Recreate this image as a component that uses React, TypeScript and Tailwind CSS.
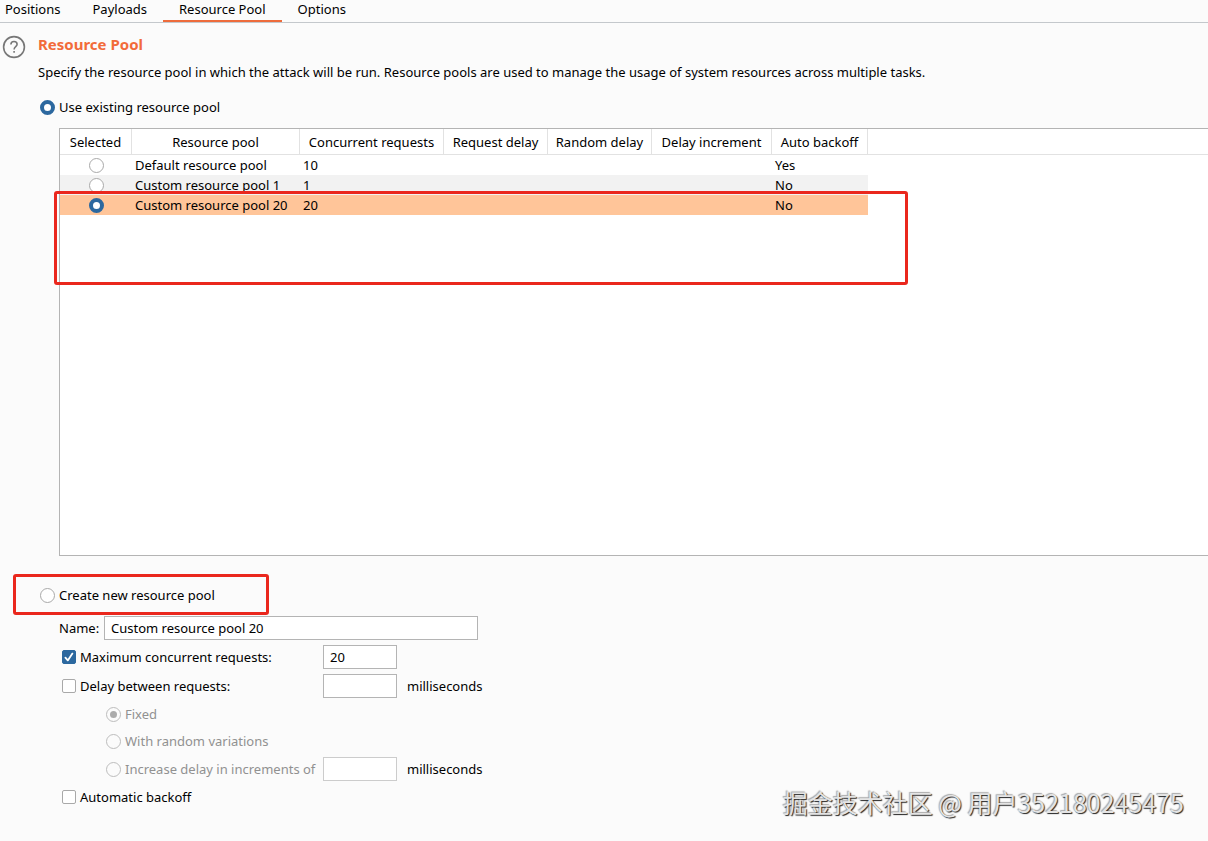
import { useState } from 'react';
import type { InputHTMLAttributes } from 'react';
import clsx from 'clsx';

const TABS = ['Positions', 'Payloads', 'Resource Pool', 'Options'];

const COLUMNS = [
  { label: 'Selected', width: 'w-[72px]' },
  { label: 'Resource pool', width: 'w-[168px]' },
  { label: 'Concurrent requests', width: 'w-[144px]' },
  { label: 'Request delay', width: 'w-[104px]' },
  { label: 'Random delay', width: 'w-[104px]' },
  { label: 'Delay increment', width: 'w-[120px]' },
  { label: 'Auto backoff', width: 'w-[96px]' },
];

const POOLS = [
  { name: 'Default resource pool', concurrent: '10', backoff: 'Yes' },
  { name: 'Custom resource pool 1', concurrent: '1', backoff: 'No' },
  { name: 'Custom resource pool 20', concurrent: '20', backoff: 'No' },
];

function Radio(props: InputHTMLAttributes<HTMLInputElement>) {
  return (
    <input
      type="radio"
      className="block size-[15px] shrink-0 appearance-none rounded-full border border-[#a9a9a9] bg-white checked:border-4 checked:border-[#2c689f] disabled:border disabled:border-[#bdbdbd] disabled:bg-[#fbfbfb] disabled:checked:border disabled:checked:border-[#bdbdbd] disabled:checked:bg-[#ababab] disabled:checked:bg-clip-content disabled:checked:p-[3px]"
      {...props}
    />
  );
}

function Checkbox(props: InputHTMLAttributes<HTMLInputElement>) {
  return (
    <span className="grid size-[14px] shrink-0">
      <input
        type="checkbox"
        className="peer col-start-1 row-start-1 size-[14px] appearance-none rounded-[2px] border border-[#a9a9a9] bg-white checked:border-[#2c689f] checked:bg-[#2c689f]"
        {...props}
      />
      <svg
        className="pointer-events-none invisible col-start-1 row-start-1 size-[14px] peer-checked:visible"
        viewBox="0 0 14 14"
        fill="none"
        stroke="white"
        strokeWidth={1.8}
        strokeLinecap="round"
        strokeLinejoin="round"
      >
        <path d="M3.4 7.6L5.8 10.4L10.4 3.6" />
      </svg>
    </span>
  );
}

function TextField({ className, ...props }: InputHTMLAttributes<HTMLInputElement>) {
  return (
    <input
      type="text"
      className={clsx('h-6 border border-[#b4b4b4] bg-white px-1.5 disabled:border-[#cccccc]', className)}
      {...props}
    />
  );
}

export default function App() {
  const [tab, setTab] = useState('Resource Pool');
  const [mode, setMode] = useState('existing');
  const [pool, setPool] = useState('Custom resource pool 20');
  const [name, setName] = useState('Custom resource pool 20');
  const [limitRequests, setLimitRequests] = useState(true);
  const [maxRequests, setMaxRequests] = useState('20');
  const [delayRequests, setDelayRequests] = useState(false);
  const [delay, setDelay] = useState('');
  const [delayType, setDelayType] = useState('fixed');
  const [increment, setIncrement] = useState('');
  const [autoBackoff, setAutoBackoff] = useState(false);

  return (
    <div className="relative min-h-screen overflow-hidden bg-[#fbfbfb] font-['Noto_Sans','Noto_Sans_CJK_SC',sans-serif] text-[13px] leading-5 text-black">
      {/* Tabs */}
      <nav className="flex h-[23px] border-b border-[#c4c8cc]">
        {TABS.map((label) => (
          <button
            key={label}
            onClick={() => setTab(label)}
            className={clsx(
              'flex items-start border-b-2 px-4 leading-[18px] first:pl-[5px]',
              tab === label ? 'border-[#ee6c3c]' : 'border-transparent'
            )}
          >
            {label}
          </button>
        ))}
      </nav>

      <main className="flex">
        <button aria-label="Help" className="mt-3 ml-0.5 size-6 shrink-0 self-start">
          <svg viewBox="0 0 24 24" fill="none" stroke="#777777" strokeWidth={1.6}>
            <circle cx="12" cy="12" r="10.4" />
            <path d="M8.9 9.6C8.9 7.7 10.2 6.5 12 6.5C13.9 6.5 15.1 7.7 15.1 9.3C15.1 11.7 12.1 11.6 12.1 14.4" />
            <path d="M12.1 16V17.8" />
          </svg>
        </button>

        <div className="min-w-0 flex-1 pt-[11px] pl-3">
          <h1 className="text-[15px] leading-5 font-bold text-[#f26b3a]">Resource Pool</h1>
          <p className="mt-2">
            Specify the resource pool in which the attack will be run. Resource pools are used to manage the usage of
            system resources across multiple tasks.
          </p>

          <label className="mt-[15px] ml-0.5 flex w-fit items-center gap-1">
            <Radio name="mode" checked={mode === 'existing'} onChange={() => setMode('existing')} />
            Use existing resource pool
          </label>

          {/* Existing pools */}
          <div className="relative mt-[11px] ml-[21px] h-[428px] border border-r-0 border-[#b4b4b4] bg-white">
            <table className="w-full table-fixed border-separate border-spacing-0">
              <thead>
                <tr className="h-[26px]">
                  {COLUMNS.map((col) => (
                    <th
                      key={col.label}
                      className={clsx('border-r border-b border-[#e2e2e2] p-0 font-normal whitespace-nowrap', col.width)}
                    >
                      {col.label}
                    </th>
                  ))}
                  <td className="border-b border-[#e2e2e2] p-0" />
                </tr>
              </thead>
              <tbody>
                {POOLS.map((row) => (
                  <tr
                    key={row.name}
                    className={clsx(
                      'h-5 *:p-0 *:whitespace-nowrap',
                      pool === row.name
                        ? '*:not-last:bg-[#ffc599]'
                        : 'even:*:not-last:bg-[#f2f2f2]'
                    )}
                  >
                    <td>
                      <div className="flex justify-center">
                        <Radio
                          name="pool"
                          aria-label={row.name}
                          checked={pool === row.name}
                          onChange={() => setPool(row.name)}
                        />
                      </div>
                    </td>
                    <td>
                      <span className="pl-[3px]">{row.name}</span>
                    </td>
                    <td>
                      <span className="pl-[3px]">{row.concurrent}</span>
                    </td>
                    <td />
                    <td />
                    <td />
                    <td>
                      <span className="pl-[3px]">{row.backoff}</span>
                    </td>
                    <td />
                  </tr>
                ))}
              </tbody>
            </table>
            <div className="pointer-events-none absolute top-[62px] -left-1.5 h-[94px] w-[854px] rounded-[3px] border-[3px] border-[#ea271d]" />
          </div>

          {/* New pool */}
          <div className="relative mt-[29px] ml-0.5 w-fit">
            <label className="flex items-center gap-1">
              <Radio name="mode" checked={mode === 'new'} onChange={() => setMode('new')} />
              Create new resource pool
            </label>
            <div className="pointer-events-none absolute -top-[11px] -left-[27px] h-[41px] w-[256px] rounded-[3px] border-[3px] border-[#ea271d]" />
          </div>

          <div className="mt-[11px] ml-[21px] flex flex-col gap-[5px]">
            <div className="flex items-center">
              <label htmlFor="pool-name" className="w-[45px]">
                Name:
              </label>
              <TextField
                id="pool-name"
                className="w-[374px]"
                value={name}
                onChange={(e) => setName(e.target.value)}
              />
            </div>

            <div className="flex items-center">
              <label className="flex w-[264px] items-center gap-1 pl-[3px]">
                <Checkbox checked={limitRequests} onChange={(e) => setLimitRequests(e.target.checked)} />
                Maximum concurrent requests:
              </label>
              <TextField
                aria-label="Maximum concurrent requests"
                className="w-[74px]"
                value={maxRequests}
                onChange={(e) => setMaxRequests(e.target.value)}
              />
            </div>

            <div className="flex items-center">
              <label className="flex w-[264px] items-center gap-1 pl-[3px]">
                <Checkbox checked={delayRequests} onChange={(e) => setDelayRequests(e.target.checked)} />
                Delay between requests:
              </label>
              <TextField
                aria-label="Delay in milliseconds"
                className="w-[74px]"
                value={delay}
                onChange={(e) => setDelay(e.target.value)}
              />
              <span className="pl-2.5">milliseconds</span>
            </div>

            <label
              className={clsx('flex h-[22px] items-center gap-1 pl-[47px]', !delayRequests && 'text-[#919191]')}
            >
              <Radio
                name="delay-type"
                disabled={!delayRequests}
                checked={delayType === 'fixed'}
                onChange={() => setDelayType('fixed')}
              />
              Fixed
            </label>
            <label
              className={clsx('flex h-[22px] items-center gap-1 pl-[47px]', !delayRequests && 'text-[#919191]')}
            >
              <Radio
                name="delay-type"
                disabled={!delayRequests}
                checked={delayType === 'random'}
                onChange={() => setDelayType('random')}
              />
              With random variations
            </label>
            <div className="flex items-center">
              <label
                className={clsx(
                  'flex w-[264px] items-center gap-1 pl-[47px] whitespace-nowrap',
                  !delayRequests && 'text-[#919191]'
                )}
              >
                <Radio
                  name="delay-type"
                  disabled={!delayRequests}
                  checked={delayType === 'increment'}
                  onChange={() => setDelayType('increment')}
                />
                Increase delay in increments of
              </label>
              <TextField
                aria-label="Increment in milliseconds"
                className="w-[74px]"
                disabled={!delayRequests}
                value={increment}
                onChange={(e) => setIncrement(e.target.value)}
              />
              <span className="pl-2.5">milliseconds</span>
            </div>

            <label className="flex h-[22px] w-fit items-center gap-1 pl-[3px]">
              <Checkbox checked={autoBackoff} onChange={(e) => setAutoBackoff(e.target.checked)} />
              Automatic backoff
            </label>
          </div>
        </div>
      </main>

      <div className="pointer-events-none absolute right-6 bottom-[21px] font-['Noto_Sans_CJK_SC',sans-serif] text-[25px] leading-9 text-[#e4e4e4] [text-shadow:1px_1px_1px_#222222,-1px_-1px_1px_#aaaaaa]">
        掘金技术社区 @ 用户352180245475
      </div>
    </div>
  );
}
